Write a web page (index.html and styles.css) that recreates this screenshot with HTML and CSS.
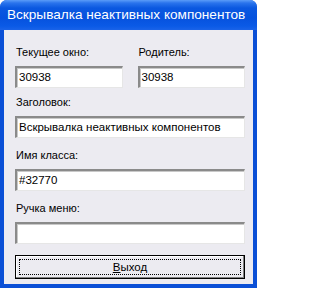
FILE: index.html
```html
<!DOCTYPE html>
<html>
<head>
<meta charset="utf-8">
<link rel="stylesheet" href="styles.css">
</head>
<body>
<div class="window">
  <div class="titlebar">Вскрывалка неактивных компонентов</div>
  <div class="client">
    <div class="row2">
      <div class="field">
        <div class="label">Текущее окно:</div>
        <div class="input">30938</div>
      </div>
      <div class="field">
        <div class="label">Родитель:</div>
        <div class="input">30938</div>
      </div>
    </div>
    <div class="field">
      <div class="label">Заголовок:</div>
      <div class="input">Вскрывалка неактивных компонентов</div>
    </div>
    <div class="field">
      <div class="label">Имя класса:</div>
      <div class="input">#32770</div>
    </div>
    <div class="field">
      <div class="label">Ручка меню:</div>
      <div class="input"></div>
    </div>
    <div class="button"><span class="focus"><u>В</u>ыход</span></div>
  </div>
</div>
</body>
</html>
```
FILE: styles.css
```css
html, body {
  margin: 0;
  padding: 0;
  background: #ffffff;
}
.window {
  width: 257px;
  height: 288px;
  box-sizing: border-box;
  display: flex;
  flex-direction: column;
  background: #0a4fd6;
  border-radius: 7px 7px 0 0;
  overflow: hidden;
  font-family: "Liberation Sans", Arial, sans-serif;
}
.titlebar {
  height: 30px;
  flex: none;
  box-sizing: border-box;
  padding: 0 0 1px 7px;
  display: flex;
  align-items: center;
  color: #ffffff;
  font-size: 13.6px;
  background: linear-gradient(to bottom, #5b9cf8 0px, #2a74ec 3px, #0b58e0 8px, #0652de 18px, #0a5ae6 26px, #1a63e8 30px);
}
.client {
  flex: 1;
  margin: 0 4px 4px 4px;
  background: #ecebf1;
  padding: 16px 8px 0 11px;
  display: flex;
  flex-direction: column;
  font-size: 11px;
  color: #000;
}
.row2 {
  display: grid;
  grid-template-columns: 1fr 1fr;
  column-gap: 15px;
  margin-bottom: 8px;
}
.row2 .field {
  margin-bottom: 0;
}
.field {
  display: flex;
  flex-direction: column;
  margin-bottom: 11px;
}
.label {
  line-height: 13px;
  height: 13px;
  margin-bottom: 7px;
  padding-left: 1px;
}
.input {
  height: 22px;
  box-sizing: border-box;
  background: #ffffff;
  border-top: 2px solid #8a8a8a;
  border-left: 2px solid #8a8a8a;
  border-right: 1px solid #e6e6e6;
  border-bottom: 1px solid #e6e6e6;
  box-shadow: inset 1px 1px 0 #c8c8c8;
  padding: 1px 0 0 2px;
  line-height: 17px;
  font-size: 11.5px;
  white-space: nowrap;
  overflow: hidden;
}
.button {
  margin-top: 0;
  height: 24px;
  box-sizing: border-box;
  border: 1px solid #000;
  background: #ecebf1;
  box-shadow: inset -1px -1px 0 #808080, inset 1px 1px 0 #ffffff;
  padding: 3px;
  display: flex;
}
.focus {
  flex: 1;
  border: 1px dotted #000;
  display: flex;
  align-items: center;
  justify-content: center;
  font-size: 11.5px;
}
.focus u {
  text-decoration: underline;
}
```
